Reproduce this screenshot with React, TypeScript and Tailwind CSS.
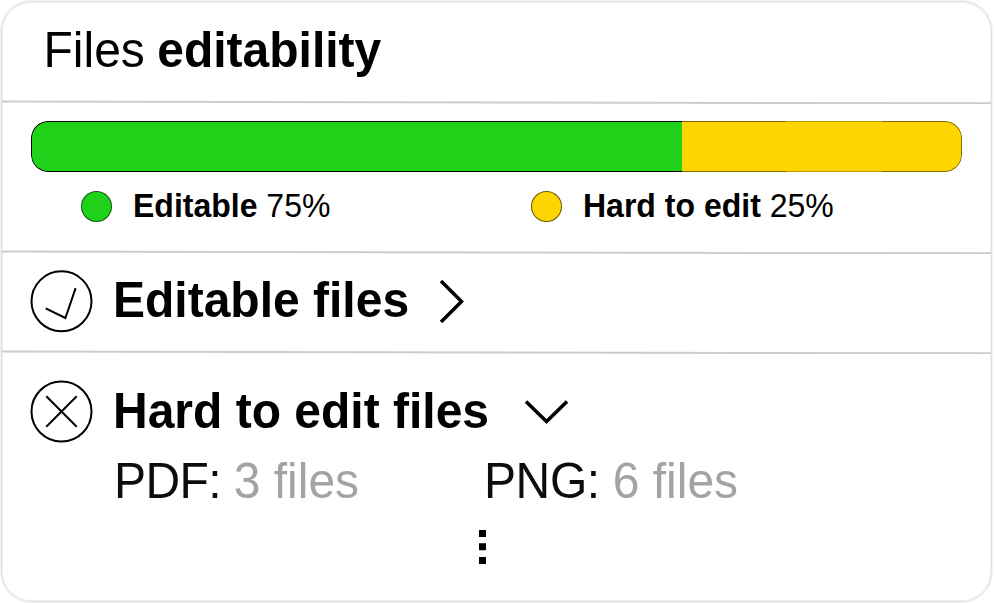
import type { ReactNode } from "react";

function Divider() {
  return (
    <svg className="block h-1 w-full shrink-0" viewBox="0 0 989 4" preserveAspectRatio="none">
      <line x1="0" y1="1.5" x2="989" y2="3.3" stroke="#cccccc" strokeWidth="2" />
    </svg>
  );
}

function Text({ children, bold }: { children: ReactNode; bold?: boolean }) {
  return (
    <span className={`block origin-[0_41px] scale-y-[1.05] whitespace-pre text-[48px] leading-[48px] ${bold ? "font-bold" : ""}`}>
      {children}
    </span>
  );
}

function Legend({ color, label, value }: { color: string; label: string; value: string }) {
  return (
    <div className="flex w-[450px] items-center gap-[21px]">
      <span className={`size-[31px] rounded-full border border-black/60 ${color}`} />
      <span className="block origin-[0_27px] scale-y-[1.05] whitespace-pre text-[32px] leading-[32px]">
        <b>{label}</b> {value}
      </span>
    </div>
  );
}

export default function App() {
  return (
    <div className="h-[603px] w-[994px] overflow-hidden bg-white pl-px pt-px font-['Liberation_Sans',Arial,sans-serif] text-black">
      <main className="flex h-[601px] w-[991px] flex-col rounded-[30px] border border-[#e0e0e0] pt-px shadow-[0_0_0_1px_#f3f3f3,inset_0_0_0_1px_#f0f0f0]">
        <header className="h-[97px] shrink-0 pl-[41.5px] pt-[24px]">
          <Text>Files <b className="-ml-px">editability</b></Text>
        </header>
        <Divider />
        <section className="h-[146px] shrink-0 pl-[29px] pt-[17px]">
          <div className="flex h-[51px] w-[931px] overflow-hidden rounded-[17px]">
            <div className="w-[650.5px] shrink-0 rounded-l-[17px] border border-r-0 border-black bg-[#20d11a]" />
            <div className="flex flex-1">
              <div className="w-[104px] border-y border-[#806b00] bg-[#ffd500]" />
              <div className="w-[96px] border-y border-[#bf9f00] bg-[#ffd500]" />
              <div className="flex-1 rounded-r-[17px] border border-l-0 border-[#806b00] bg-[#ffd500]" />
            </div>
          </div>
          <div className="flex pl-[50px] pt-[18px]">
            <Legend color="bg-[#20d11a]" label="Editable" value="75%" />
            <Legend color="bg-[#ffd500]" label="Hard to edit" value="25%" />
          </div>
        </section>
        <Divider />
        <section className="flex h-[96px] shrink-0 items-start pl-[28px] pt-[16px]">
          <svg className="size-[63px]" viewBox="0 0 63 63" fill="none" stroke="black" strokeWidth="2">
            <circle cx="31.5" cy="31.3" r="30" />
            <path d="M15.7 38.3L35.4 48L45.6 18.1" />
          </svg>
          <div className="ml-[20px] mt-[7px] w-[326px]"><Text bold>Editable files</Text></div>
          <svg className="mt-[9px] h-[44px] w-[26px]" viewBox="0 0 26 44" fill="none" stroke="black" strokeWidth="3.5">
            <path d="M2 2L22.5 22.5L2 43" />
          </svg>
        </section>
        <Divider />
        <section className="pl-[28px] pt-[26px]">
          <div className="flex items-start">
            <svg className="size-[63px]" viewBox="0 0 63 63" fill="none" stroke="black" strokeWidth="2">
              <circle cx="31.5" cy="31.5" r="30" />
              <path d="M16.3 16.3L46.7 46.7M46.7 16.3L16.3 46.7" />
            </svg>
            <div className="ml-[20px] mt-[8px] w-[411px]"><Text bold>Hard to edit files</Text></div>
            <svg className="mt-[19px] h-[26px] w-[44px]" viewBox="0 0 44 26" fill="none" stroke="black" strokeWidth="3.5">
              <path d="M2 2.5L22.5 22.5L43 2.5" />
            </svg>
          </div>
          <div className="mt-[15px] flex pl-[84px] text-[#0d0d0d]">
            <div className="w-[370px]"><Text><span className="tracking-[-0.6px]">PDF: </span><span className="text-[#a3a3a3]">3 files</span></Text></div>
            <Text><span className="tracking-[-0.4px]">PNG: </span><span className="text-[#a3a3a3]">6 files</span></Text>
          </div>
          <svg className="ml-[449px] mt-[24px] h-[34px] w-[7px]" viewBox="0 0 7 34">
            <path d="M0 0H7V7H0ZM0 13.3H7V20.3H0ZM0 27H7V34H0Z" />
          </svg>
        </section>
      </main>
    </div>
  );
}
